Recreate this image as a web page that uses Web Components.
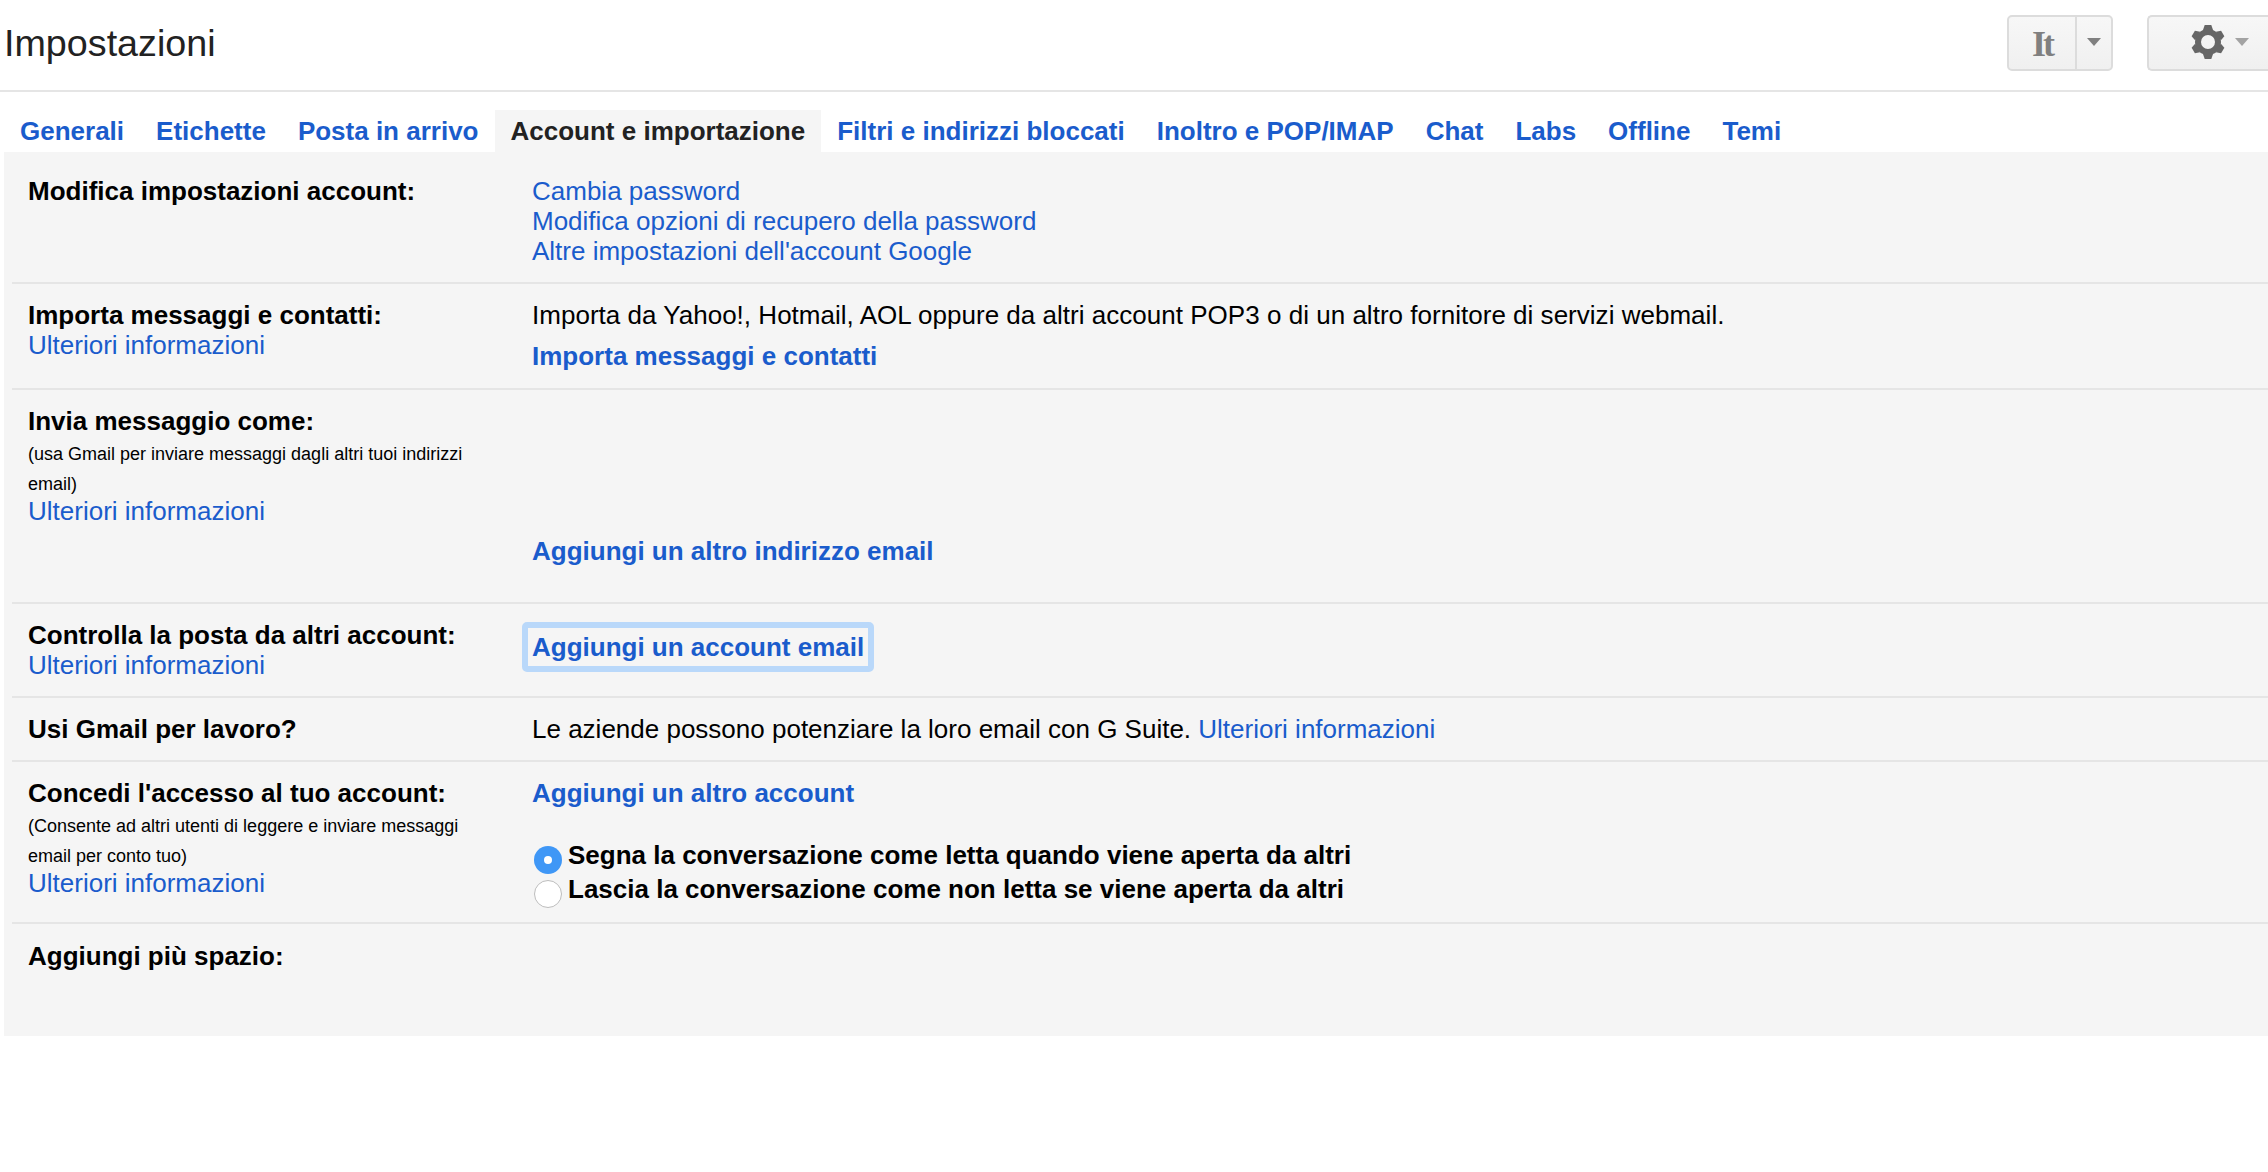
<!DOCTYPE html>
<html lang="it"><head><meta charset="utf-8"><title>Impostazioni</title>
<style>
html,body{margin:0;padding:0;background:#fff;overflow-x:hidden}
body{font:26px/30px "Liberation Sans",Arial,sans-serif;color:#000}
</style></head><body>
<template id="t-header"><style>
:host{display:flex;align-items:flex-start;justify-content:space-between;height:90px;border-bottom:2px solid #e5e5e5}
h1{margin:20px 0 0 4px;font:400 37.7px/46px "Liberation Sans",Arial,sans-serif;color:#222}
.tools{display:flex;gap:34px;margin-top:15px}
.btn{display:flex;height:56px;box-sizing:border-box;border:2px solid #dcdcdc;border-radius:5px;background:linear-gradient(#f7f7f7,#f0f0f0)}
.it{width:106px}
.it .l{width:66px;border-right:2px solid #dcdcdc;display:flex;align-items:center;justify-content:center;padding-top:2px;box-sizing:content-box;font:700 36px/34px "Liberation Serif",serif;letter-spacing:-3px;color:#808080}
.it .r{flex:1;display:flex;align-items:center;justify-content:center}
.gear{width:121px;border-right:0;border-radius:5px 0 0 5px;align-items:center;padding-left:42px;gap:10px}
.arrow{width:0;height:0;border:7px solid transparent;border-top:8px solid #808080;border-bottom:0;margin-top:-3px}
.gear .arrow{border-top-color:#a3a3a3}
svg{display:block;width:34px;height:34px;margin-top:-2px}
</style><h1>Impostazioni</h1><div class="tools">
<div class="btn it"><div class="l">It</div><div class="r"><span class="arrow"></span></div></div>
<div class="btn gear"><svg viewBox="-17 -17 34 34"><circle r="10" fill="none" stroke="#666" stroke-width="6"/><g fill="#666"><path d="M-5-12-3.300-17H3.300L5-12Z"/><path transform="rotate(60)" d="M-5-12-3.300-17H3.300L5-12Z"/><path transform="rotate(120)" d="M-5-12-3.300-17H3.300L5-12Z"/><path transform="rotate(180)" d="M-5-12-3.300-17H3.300L5-12Z"/><path transform="rotate(240)" d="M-5-12-3.300-17H3.300L5-12Z"/><path transform="rotate(300)" d="M-5-12-3.300-17H3.300L5-12Z"/></g></svg><span class="arrow"></span></div>
</div></template>

<template id="t-tabs"><style>
:host{display:flex;margin:18px 0 0 4px;height:42px;font-weight:700;font-size:26px}
</style><slot></slot></template>

<template id="t-tab"><style>
:host{display:block;padding:5px 16px 0;height:42px;box-sizing:border-box;color:#1a5ccc;line-height:32px;white-space:nowrap}
:host([active]){background:#f5f5f5;color:#222}
</style><slot></slot></template>

<template id="t-panel"><style>
:host{display:block;margin-left:4px;background:#f5f5f5;height:884px;padding-left:8px;box-sizing:border-box}
</style><slot></slot></template>

<template id="t-row"><style>
:host{display:grid;grid-template-columns:504px 1fr;align-content:start;padding-left:16px;box-sizing:border-box;border-bottom:2px solid #e5e5e5;height:var(--h);padding-top:var(--pt,16px)}
:host([last]){border-bottom:0}
.l{max-width:470px}
</style><div class="l"><slot name="label"></slot></div><div class="v"><slot></slot></div></template>

<template id="t-link"><style>
:host{color:#1a5ccc}
:host([b]){font-weight:700}
:host([block]){display:block}
</style><slot></slot></template>

<template id="t-label"><style>
:host{display:block;font-weight:700}
</style><slot></slot></template>

<template id="t-note"><style>
:host{display:block;font-size:18px;line-height:30px;margin:3px 0 -3px}
</style><slot></slot></template>

<template id="t-focus"><style>
:host{display:inline-block;margin:2px 0 0 -10px;padding:4px;border:6px solid #b9d8fa;border-radius:5px;font-weight:700;color:#1a5ccc;line-height:30px;white-space:nowrap}
</style><slot></slot></template>

<template id="t-radio"><style>
:host{display:flex;font-weight:700;height:34px;align-items:flex-start;white-space:nowrap}
i{display:block;box-sizing:border-box;width:28px;height:28px;border-radius:50%;margin:6px 6px 0 2px;background:#fff;border:1.5px solid #bdbdbd;flex:none}
:host([on]) i{background:#3f97f6;border:0;display:flex;align-items:center;justify-content:center}
:host([on]) i::after{content:"";width:8px;height:8px;border-radius:50%;background:#fff}
span{display:block}
</style><i></i><span><slot></slot></span></template>

<gm-header></gm-header>
<gm-tabs>
<gm-tab>Generali</gm-tab><gm-tab>Etichette</gm-tab><gm-tab>Posta in arrivo</gm-tab><gm-tab active>Account e importazione</gm-tab><gm-tab>Filtri e indirizzi bloccati</gm-tab><gm-tab>Inoltro e POP/IMAP</gm-tab><gm-tab>Chat</gm-tab><gm-tab>Labs</gm-tab><gm-tab>Offline</gm-tab><gm-tab>Temi</gm-tab>
</gm-tabs>
<gm-panel>
<gm-row style="--h:132px;--pt:24px"><gm-label slot="label">Modifica impostazioni account:</gm-label>
<div><gm-link block>Cambia password</gm-link><gm-link block>Modifica opzioni di recupero della password</gm-link><gm-link block>Altre impostazioni dell'account Google</gm-link></div></gm-row>
<gm-row style="--h:106px"><div slot="label"><gm-label>Importa messaggi e contatti:</gm-label><gm-link block>Ulteriori informazioni</gm-link></div>
<div><div style="letter-spacing:.02px">Importa da Yahoo!, Hotmail, AOL oppure da altri account POP3 o di un altro fornitore di servizi webmail.</div><gm-link b block style="margin-top:11px">Importa messaggi e contatti</gm-link></div></gm-row>
<gm-row style="--h:214px"><div slot="label"><gm-label>Invia messaggio come:</gm-label><gm-note>(usa Gmail per inviare messaggi dagli altri tuoi indirizzi email)</gm-note><gm-link block>Ulteriori informazioni</gm-link></div>
<gm-link b block style="margin-top:130px">Aggiungi un altro indirizzo email</gm-link></gm-row>
<gm-row style="--h:94px"><div slot="label"><gm-label>Controlla la posta da altri account:</gm-label><gm-link block>Ulteriori informazioni</gm-link></div>
<div><gm-focus>Aggiungi un account email</gm-focus></div></gm-row>
<gm-row style="--h:64px"><gm-label slot="label">Usi Gmail per lavoro?</gm-label>
<div>Le aziende possono potenziare la loro email con G Suite. <gm-link>Ulteriori informazioni</gm-link></div></gm-row>
<gm-row style="--h:162px"><div slot="label"><gm-label>Concedi l'accesso al tuo account:</gm-label><gm-note>(Consente ad altri utenti di leggere e inviare messaggi email per conto tuo)</gm-note><gm-link block>Ulteriori informazioni</gm-link></div>
<div><gm-link b block style="margin-bottom:32px">Aggiungi un altro account</gm-link><gm-radio on>Segna la conversazione come letta quando viene aperta da altri</gm-radio><gm-radio>Lascia la conversazione come non letta se viene aperta da altri</gm-radio></div></gm-row>
<gm-row last style="--h:112px;--pt:17px"><gm-label slot="label">Aggiungi più spazio:</gm-label><div></div></gm-row>
</gm-panel>
<script>
const reg=(n,t)=>customElements.define(n,class extends HTMLElement{constructor(){super();this.attachShadow({mode:'open'}).appendChild(document.getElementById(t).content.cloneNode(true))}});
[['gm-header','t-header'],['gm-tabs','t-tabs'],['gm-tab','t-tab'],['gm-panel','t-panel'],['gm-row','t-row'],['gm-link','t-link'],['gm-label','t-label'],['gm-note','t-note'],['gm-focus','t-focus'],['gm-radio','t-radio']].forEach(a=>reg(a[0],a[1]));
</script>
</body></html>
